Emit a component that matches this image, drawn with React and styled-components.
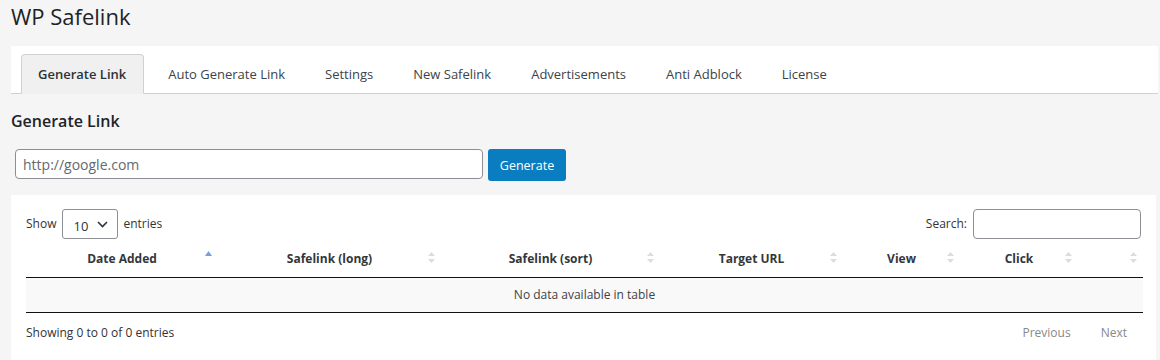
import React, { useState } from "react";
import styled, { createGlobalStyle } from "styled-components";

const GlobalStyle = createGlobalStyle`
  html, body {
    margin: 0;
    padding: 0;
    background: #f5f5f5;
  }
  body {
    font-family: "Open Sans", "Noto Sans", sans-serif;
    font-size: 12px;
    color: #3c434a;
  }
  * {
    box-sizing: border-box;
  }
`;

const tabs = [
  "Generate Link",
  "Auto Generate Link",
  "Settings",
  "New Safelink",
  "Advertisements",
  "Anti Adblock",
  "License",
];

const columns = [
  { title: "Date Added", width: 192, sort: "asc" },
  { title: "Safelink (long)", width: 223 },
  { title: "Safelink (sort)", width: 219 },
  { title: "Target URL", width: 183 },
  { title: "View", width: 117 },
  { title: "Click", width: 118 },
  { title: "", width: 65 },
];

const SortIcon = ({ dir }) => (
  <SortMark width="7" height="13" viewBox="0 0 7 13">
    {dir === "asc" ? (
      <polygon points="0,5 3.5,0 7,5" fill="#7a9fd3" />
    ) : (
      <>
        <polygon points="0,5 3.5,1 7,5" fill="#dcdcdc" />
        <polygon points="0,8 3.5,12 7,8" fill="#dcdcdc" />
      </>
    )}
  </SortMark>
);

const Chevron = () => (
  <ChevronSvg width="11" height="7" viewBox="0 0 11 7">
    <path d="M1 1l4.5 4.5L10 1" fill="none" stroke="#2c3338" strokeWidth="1.6" />
  </ChevronSvg>
);

const App = () => {
  const [active, setActive] = useState(0);
  const [url, setUrl] = useState("");

  return (
    <>
      <GlobalStyle />
      <Wrap>
        <Title>WP Safelink</Title>
        <TabBar>
          {tabs.map((t, i) => (
            <Tab key={t} $active={i === active} onClick={() => setActive(i)}>
              {t}
            </Tab>
          ))}
        </TabBar>

        <SectionTitle>Generate Link</SectionTitle>
        <FormRow>
          <UrlInput
            placeholder="http://google.com"
            value={url}
            onChange={(e) => setUrl(e.target.value)}
          />
          <PrimaryButton>Generate</PrimaryButton>
        </FormRow>

        <TablePanel>
          <Controls>
            <Label>
              Show
              <SelectBox>
                10
                <Chevron />
              </SelectBox>
              entries
            </Label>
            <Label>
              Search:
              <SearchInput />
            </Label>
          </Controls>

          <Table>
            <colgroup>
              {columns.map((c, i) => (
                <col key={i} style={{ width: c.width }} />
              ))}
            </colgroup>
            <thead>
              <tr>
                {columns.map((c, i) => (
                  <Th key={i}>
                    {c.title}
                    <SortIcon dir={c.sort} />
                  </Th>
                ))}
              </tr>
            </thead>
            <tbody>
              <tr>
                <EmptyCell colSpan={columns.length}>
                  No data available in table
                </EmptyCell>
              </tr>
            </tbody>
          </Table>

          <Footer>
            <span>Showing 0 to 0 of 0 entries</span>
            <Pager>
              <PageLink>Previous</PageLink>
              <PageLink>Next</PageLink>
            </Pager>
          </Footer>
        </TablePanel>
      </Wrap>
    </>
  );
};

export default App;

const Wrap = styled.div`
  padding: 0 2px 0 11px;
`;

const Title = styled.h1`
  margin: 0;
  padding: 1px 0 0;
  height: 46px;
  font-size: 22px;
  font-weight: 400;
  line-height: 30px;
  color: #1d2327;
`;

const TabBar = styled.div`
  display: flex;
  align-items: flex-end;
  gap: 6px;
  height: 48px;
  padding: 0 10px;
  background: #fff;
  border-bottom: 1px solid #d0d0d0;
`;

const Tab = styled.div`
  height: 40px;
  margin-bottom: -1px;
  margin-right: ${(p) => (p.$active ? "1px" : "0")};
  padding: ${(p) => (p.$active ? "0 17px 0 16px" : "0 16px")};
  display: flex;
  align-items: center;
  font-size: 13px;
  cursor: pointer;
  color: ${(p) => (p.$active ? "#2c3338" : "#3c434a")};
  font-weight: ${(p) => (p.$active ? 600 : 400)};
  background: ${(p) => (p.$active ? "#f0f0f1" : "transparent")};
  border: 1px solid ${(p) => (p.$active ? "#d0d0d0" : "transparent")};
  border-bottom-color: ${(p) => (p.$active ? "#f0f0f1" : "transparent")};
  border-radius: 4px 4px 0 0;
`;

const SectionTitle = styled.h2`
  margin: 0;
  padding: 16px 0 0;
  height: 55px;
  font-size: 16px;
  font-weight: 600;
  line-height: 22px;
  color: #1d2327;
`;

const FormRow = styled.div`
  display: flex;
  align-items: flex-start;
  gap: 5px;
  padding-left: 4px;
  height: 46px;
`;

const UrlInput = styled.input`
  width: 468px;
  height: 30px;
  padding: 0 7px;
  border: 1px solid #8c8f94;
  border-radius: 4px;
  font-family: inherit;
  font-size: 14px;
  color: #2c3338;
  background: #fff;
  outline: none;
  &::placeholder {
    color: #646970;
  }
`;

const PrimaryButton = styled.button`
  width: 78px;
  height: 32px;
  border: 0;
  border-radius: 3px;
  background: #0a7cc0;
  color: #fff;
  font-family: inherit;
  font-size: 12.5px;
  cursor: pointer;
`;

const TablePanel = styled.div`
  background: #fff;
  padding: 14px 15px 20px;
  margin-right: 2px;
  min-height: 170px;
`;

const Controls = styled.div`
  display: flex;
  justify-content: space-between;
  align-items: center;
  margin-bottom: 6px;
`;

const Label = styled.label`
  display: flex;
  align-items: center;
  gap: 5px;
  font-size: 12px;
  color: #333;
  line-height: 1;
`;

const SelectBox = styled.div`
  width: 56px;
  height: 30px;
  display: flex;
  align-items: center;
  justify-content: space-between;
  margin-left: 1px;
  padding: 4px 9px 0 10px;
  border: 1px solid #8c8f94;
  border-radius: 3px;
  font-size: 13px;
  color: #2c3338;
`;

const ChevronSvg = styled.svg`
  display: block;
  margin-top: -3px;
`;

const SearchInput = styled.input`
  width: 168px;
  height: 30px;
  border: 1px solid #8c8f94;
  border-radius: 4px;
  outline: none;
  margin-left: 1px;
`;

const Table = styled.table`
  width: 100%;
  border-collapse: collapse;
  table-layout: fixed;
`;

const Th = styled.th`
  position: relative;
  height: 32px;
  padding: 0 10px 4px;
  text-align: center;
  font-size: 12px;
  font-weight: 700;
  color: #32373c;
  border-bottom: 1px solid #111;
`;

const SortMark = styled.svg`
  position: absolute;
  right: 6px;
  top: 6px;
`;

const EmptyCell = styled.td`
  height: 35px;
  text-align: center;
  background: #f9f9f9;
  border-bottom: 1px solid #111;
  font-size: 12px;
  color: #3c434a;
`;

const Footer = styled.div`
  display: flex;
  justify-content: space-between;
  align-items: center;
  height: 40px;
  font-size: 12px;
  color: #333;
`;

const Pager = styled.div`
  display: flex;
  gap: 30px;
  padding-right: 14px;
`;

const PageLink = styled.span`
  color: #888;
  font-size: 12px;
  cursor: default;
`;
